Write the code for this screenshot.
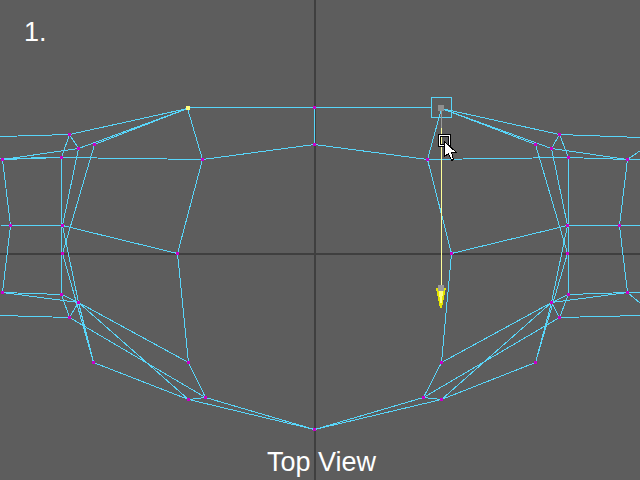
type Pt = [number, number];

// mesh vertices, left (l) and right (r) halves plus the centre column
const P: Record<string, Pt> = {
  U: [314, 107], V: [314, 144], T: [314, 429],
  F: [187, 108], X: [441, 108],
  lA: [69, 134], lB: [78, 148], lC: [94, 144], lD: [61, 157], lE: [2, 159], lG: [202, 159],
  lH: [177, 253], lI: [62, 225], lJ: [10, 225], lK: [62, 253], lL: [2, 292], lM: [61, 294],
  lN: [78, 302], lO: [69, 317], lP: [93, 362], lQ: [188, 362], lR: [205, 397], lS: [188, 399],
  rA: [559, 134], rB: [551, 148], rC: [535, 144], rD: [568, 157], rE: [627, 159], rG: [427, 159],
  rH: [451, 253], rI: [567, 225], rJ: [619, 225], rK: [567, 253], rL: [627, 292], rM: [568, 294],
  rN: [551, 302], rO: [559, 317], rP: [535, 362], rQ: [441, 362], rR: [423, 397], rS: [441, 399],
};

const sideEdges = (top: string) =>
  [
    ["A", "B"], ["A", "D"], ["D", "M"], ["D", "G"], ["D", "E"], ["B", "E"], ["B", "I"], ["C", "K"],
    ["E", "J"], ["J", "L"], ["J", "I"], ["I", "H"], ["I", "N"], ["K", "P"], ["G", "H"], ["H", "Q"],
    ["L", "M"], ["L", "N"], ["M", "N"], ["M", "O"], ["N", "O"], ["N", "P"], ["N", "Q"], ["N", "S"],
    ["O", "R"], ["P", "S"], ["Q", "R"], ["S", "R"],
  ].map(([a, b]) => [top + a, top + b]);

const edges: string[][] = [
  ...sideEdges("l"),
  ...sideEdges("r"),
  ["F", "lA"], ["F", "lB"], ["F", "lC"], ["F", "lG"],
  ["X", "rA"], ["X", "rB"], ["X", "rC"], ["X", "rG"],
  ["U", "V"], ["V", "lG"], ["V", "rG"],
  ["lS", "T"], ["lR", "T"], ["rS", "T"], ["rR", "T"],
];

// lines that leave the picture
const open: [number, number, number, number][] = [
  [0, 136, 69, 134], [0, 158, 61, 157], [0, 225, 62, 225], [0, 292, 2, 292], [0, 315, 69, 317],
  [559, 134, 640, 137], [627, 159, 640, 159], [627, 159, 640, 150], [567, 225, 640, 225],
  [627, 292, 640, 292], [627, 292, 640, 303], [559, 317, 640, 315], [188, 107, 431, 107],
];

const verts = Object.entries(P).filter(([k]) => k !== "F" && k !== "X");

export default function App() {
  return (
    <div className="relative h-[480px] w-[640px] overflow-hidden bg-[#5d5d5d] font-['Liberation_Sans',sans-serif] text-white">
      <svg width="640" height="480" className="absolute inset-0" shapeRendering="crispEdges">
        <rect x="314" y="0" width="2" height="480" fill="#3f3f3f" />
        <rect x="0" y="253" width="640" height="2" fill="#3f3f3f" />

        <g stroke="#58d6fa" strokeWidth="1" transform="translate(0.5 0.5)">
          {edges.map(([a, b]) => (
            <line key={a + b} x1={P[a][0]} y1={P[a][1]} x2={P[b][0]} y2={P[b][1]} />
          ))}
          {open.map(([x1, y1, x2, y2]) => (
            <line key={`${x1}-${y1}-${x2}-${y2}`} x1={x1} y1={y1} x2={x2} y2={y2} />
          ))}
        </g>

        {verts.map(([k, [x, y]]) => (
          <rect key={k} x={x - 1} y={y - 1} width="3" height="3" fill="#c800c8" />
        ))}
        <rect x="186" y="106" width="4" height="4" fill="#ffff80" />

        {/* selected vertex handle */}
        <rect x="431.5" y="97.5" width="20" height="20" fill="none" stroke="#58d6fa" />
        <rect x="441" y="111" width="1" height="17" fill="#9a9a9a" />
        <rect x="441" y="128" width="1" height="158" fill="#ffff99" />
        <rect x="438" y="105" width="6" height="6" fill="#8f8f8f" />

        {/* move arrow */}
        <polygon points="436,288 446,288 442,308 440,308" fill="#e6e600" />
        <polygon points="439,290 443,290 442,303 440,303" fill="#ffff80" />
        <rect x="438" y="285" width="6" height="6" fill="#9a9a9a" />

        {/* cursor */}
        <rect x="438.5" y="134.5" width="12" height="12" fill="none" stroke="#000" />
        <rect x="439.5" y="135.5" width="10" height="10" fill="none" stroke="#fff" />
        <rect x="440.5" y="136.5" width="8" height="8" fill="none" stroke="#000" />
        <polygon
          points="444.5,141.5 444.5,156.5 448.5,153.5 451.5,160.5 453.5,159.5 451.5,152.5 456.5,152.5"
          fill="#fff"
          stroke="#000"
          strokeWidth="1"
        />
      </svg>

      <div className="absolute left-[24px] top-[17px] text-[27px] leading-[30px]">1.</div>
      <div className="absolute left-[267px] top-[447px] text-[27px] leading-[30px]">Top View</div>
    </div>
  );
}
